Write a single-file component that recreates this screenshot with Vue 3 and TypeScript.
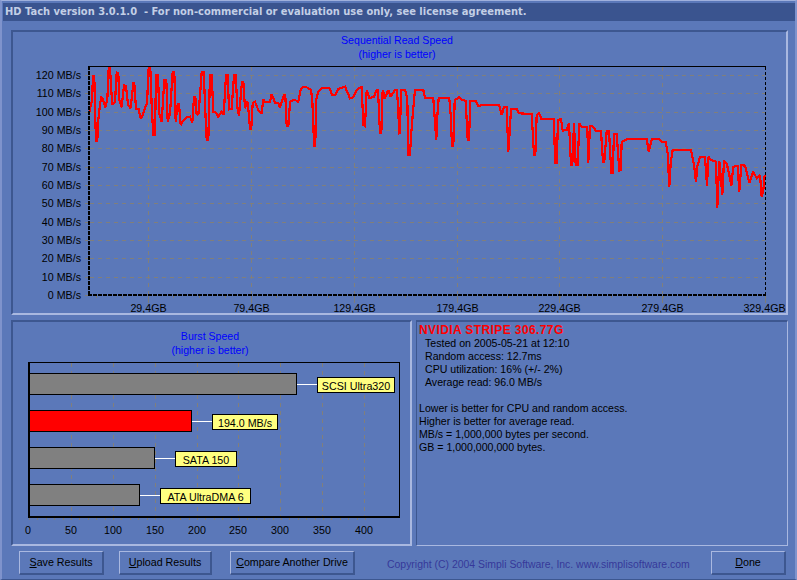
<script setup lang="ts">
const left =
  '267,340 272,318 276,300 279,228 283,228 285,330 288,422 292,422 295,360 298,335 300,310 304,293 308,296 316,322 322,300 326,205 330,205 334,270 337,315 345,305 350,218 355,220 358,300 365,322 372,255 378,258 384,315 392,325 400,250 403,250 408,328 416,328 422,356 428,345 436,320 441,310 446,203 451,203 455,320 460,405 465,405 468,225 474,225 478,340 485,365 493,240 499,240 503,365 510,340 518,215 523,215 527,365 533,312 537,312 542,375 550,362 560,352 570,350 577,368 582,290 586,290 590,345 596,340 605,215 611,215 617,360 620,420 625,420 630,225 635,225 640,335 648,338 655,350 665,335 671,345 678,225 683,225 687,328 695,326 702,225 707,225 712,320 717,348 726,245 730,245 735,325 742,305 747,345 750,388 754,385 758,310 765,305 775,330 785,340 790,298 795,306 810,305 815,282 825,308 835,310 840,322 852,285 856,285 860,378 865,378 870,310 872,303 885,300 895,305 902,270 910,260 920,262 933,270 937,300 940,380 943,438 946,438 948,300 955,275 965,265 988,263 996,285 1005,285 1015,267 1035,260 1050,295 1060,292 1070,270 1085,260 1090,375 1095,378 1100,270 1108,295 1122,290 1130,270 1134,270 1140,400 1144,400 1148,270 1155,295 1165,270 1172,290 1185,270 1190,270 1195,320 1197,400'
const right =
  '0,398 3,270 15,270 22,295 25,465 30,465 33,410 38,345 45,270 70,270 75,293 100,295 106,380 109,420 112,350 116,295 148,295 152,345 156,438 160,438 164,300 178,292 185,300 197,302 203,420 207,420 211,303 228,303 235,318 250,315 285,316 298,316 305,345 312,320 320,320 325,455 329,395 333,328 350,327 356,340 395,342 402,465 406,465 410,345 417,340 424,356 462,356 465,488 470,488 474,360 483,357 488,392 500,390 507,370 513,495 517,495 522,370 527,495 533,495 538,370 545,380 562,380 565,488 570,378 580,380 588,393 603,393 609,485 613,485 620,393 627,393 634,518 638,518 642,402 650,402 658,512 662,510 665,425 680,418 740,416 746,455 755,418 775,416 785,425 797,425 803,460 808,561 812,488 818,450 873,450 882,495 888,545 892,500 900,470 915,470 921,558 925,470 932,480 948,485 952,624 958,482 967,585 972,482 980,490 988,525 994,558 1000,500 1013,498 1018,575 1024,495 1035,497 1048,548 1060,515 1070,535 1080,525 1085,591 1090,570 1094,525'

const toPoints = (s: string, dx: number) =>
  s
    .split(' ')
    .map((p) => {
      const [x, y] = p.split(',').map(Number)
      return `${(dx + x / 3).toFixed(1)},${(y / 3).toFixed(1)}`
    })
    .join(' ')
const trace = toPoints(left, 0) + ' ' + toPoints(right, 400)

const yTicks = [120, 110, 100, 90, 80, 70, 60, 50, 40, 30, 20, 10, 0].map((v) => ({
  v,
  y: Math.round(295 - v * 1.834) + 0.5,
}))
const xTicks = [
  { x: 148.5, t: '29,4GB' },
  { x: 251.5, t: '79,4GB' },
  { x: 354.5, t: '129,4GB' },
  { x: 457.5, t: '179,4GB' },
  { x: 559.5, t: '229,4GB' },
  { x: 662.5, t: '279,4GB' },
  { x: 765.5, t: '329,4GB' },
]
const minor = Array.from({ length: 26 }, (_, i) => Math.round(96 + i * 25.75) + 0.5)

const burstGrid = [71, 113, 155, 197, 238, 280, 322, 364]
const burstAxis = [
  { x: 28, t: '0' },
  { x: 71, t: '50' },
  { x: 113, t: '100' },
  { x: 155, t: '150' },
  { x: 197, t: '200' },
  { x: 238, t: '250' },
  { x: 280, t: '300' },
  { x: 322, t: '350' },
  { x: 364, t: '400' },
]
const burstMinor = Array.from({ length: 41 }, (_, i) => Math.round(29 + i * 8.4) + 0.5)
const bars = [
  { y: 373.5, end: 296.5, lx: 317.5, lw: 77, ly: 377.5, label: 'SCSI Ultra320', fill: '#808080' },
  { y: 410.5, end: 191.5, lx: 212.5, lw: 65, ly: 414.5, label: '194.0 MB/s', fill: '#ff0000' },
  { y: 447.5, end: 154.5, lx: 175.5, lw: 61, ly: 451.5, label: 'SATA 150', fill: '#808080' },
  { y: 484.5, end: 139.5, lx: 160.5, lw: 90, ly: 488.5, label: 'ATA UltraDMA 6', fill: '#808080' },
]
const stats = [
  'Tested on 2005-05-21 at 12:10',
  'Random access: 12.7ms',
  'CPU utilization: 16% (+/- 2%)',
  'Average read: 96.0 MB/s',
]
const notes = [
  'Lower is better for CPU and random access.',
  'Higher is better for average read.',
  'MB/s = 1,000,000 bytes per second.',
  'GB = 1,000,000,000 bytes.',
]
</script>

<template>
  <div class="window">
    <header class="titlebar">HD Tach version 3.0.1.0&nbsp; - For non-commercial or evaluation use only, see license agreement.</header>

    <section class="panel top">
      <svg class="chart" width="773" height="281" viewBox="13 32 773 281">
        <text class="title" x="397" y="44">Sequential Read Speed</text>
        <text class="title" x="397" y="58">(higher is better)</text>
        <g class="grid">
          <line v-for="t in yTicks.slice(0, -1)" :key="t.v" x1="90" x2="765" :y1="t.y" :y2="t.y" />
          <line v-for="t in xTicks.slice(0, -1)" :key="t.x" :x1="t.x" :x2="t.x" y1="67" y2="294" />
        </g>
        <g class="tick">
          <line v-for="t in yTicks" :key="t.v" x1="85" x2="88" :y1="t.y" :y2="t.y" />
          <line v-for="m in minor" :key="m" :x1="m" :x2="m" y1="296" y2="298" />
          <line v-for="t in xTicks" :key="t.x" :x1="t.x" :x2="t.x" y1="296" y2="303" />
        </g>
        <polyline class="trace" :points="trace" />
        <line class="axis" x1="88" x2="766" y1="66.5" y2="66.5" />
        <line class="axis dashed" x1="765.5" x2="765.5" y1="67" y2="295" />
        <line class="axis thick dotted" x1="89" x2="89" y1="66" y2="296" />
        <line class="axis thick dotted" x1="88" x2="766" y1="295" y2="295" />
        <text v-for="t in yTicks" :key="t.v" class="label end" x="81" :y="t.y + 3.5">{{ t.v }} MB/s</text>
        <text v-for="t in xTicks" :key="t.x" class="label mid" :x="t.t === '329,4GB' ? 764.5 : t.x" y="312">{{ t.t }}</text>
      </svg>
    </section>

    <div class="lower">
      <section class="panel burst">
        <svg class="chart" width="396" height="221" viewBox="13 322 396 221">
          <text class="title" x="210" y="340">Burst Speed</text>
          <text class="title" x="210" y="354">(higher is better)</text>
          <g class="grid">
            <line v-for="g in burstGrid" :key="g" :x1="g + 0.5" :x2="g + 0.5" y1="363" y2="516" />
          </g>
          <g class="tick">
            <line v-for="m in burstMinor" :key="m" :x1="m" :x2="m" y1="518" y2="520" />
          </g>
          <g v-for="b in bars" :key="b.label">
            <line class="connector" :x1="b.end" :x2="b.lx" :y1="b.y + 11" :y2="b.y + 11" />
            <rect class="bar" x="29.5" :y="b.y" :width="b.end - 29.5" height="21" :fill="b.fill" />
            <rect class="tag" :x="b.lx" :y="b.ly" :width="b.lw" height="15" />
            <text class="label mid" :x="b.lx + b.lw / 2" :y="b.ly + 12">{{ b.label }}</text>
          </g>
          <line class="axis" x1="28" x2="400" y1="362.5" y2="362.5" />
          <line class="axis" x1="399.5" x2="399.5" y1="362" y2="518" />
          <line class="axis thick" x1="29" x2="29" y1="362" y2="518" />
          <line class="axis thick" x1="28" x2="400" y1="517" y2="517" />
          <text v-for="a in burstAxis" :key="a.t" class="label mid" :x="a.x" y="534">{{ a.t }}</text>
        </svg>
      </section>

      <section class="panel info">
        <h2 class="drive">NVIDIA STRIPE 306.77G</h2>
        <ul class="stats">
          <li v-for="s in stats" :key="s">{{ s }}</li>
        </ul>
        <ul class="notes">
          <li v-for="n in notes" :key="n">{{ n }}</li>
        </ul>
      </section>
    </div>

    <footer class="footer">
      <button class="btn save"><u>S</u>ave Results</button>
      <button class="btn upload"><u>U</u>pload Results</button>
      <button class="btn compare"><u>C</u>ompare Another Drive</button>
      <p class="copyright">Copyright (C) 2004 Simpli Software, Inc. www.simplisoftware.com</p>
      <button class="btn done"><u>D</u>one</button>
    </footer>
  </div>
</template>

<style>
html,
body {
  margin: 0;
  background: #5b78b9;
  overflow: hidden;
}
</style>

<style scoped>
.window {
  box-sizing: border-box;
  width: 797px;
  height: 580px;
  overflow: hidden;
  background: #5b78b9;
  border-top: 1px solid #9fb0dc;
  border-left: 2px solid #7f93cc;
  border-right: 2px solid #7f93cc;
  border-bottom: 1px solid #3d5790;
  padding-top: 2px;
  font: 10.6px "Liberation Sans", Arial, sans-serif;
  color: #000;
}
.titlebar {
  box-sizing: border-box;
  height: 18px;
  margin-left: 1px;
  padding-left: 2px;
  background: #3a548f;
  color: #c3cfe6;
  font: bold 9.92px/18px "DejaVu Sans", Verdana, sans-serif;
  white-space: pre;
}
.panel {
  box-sizing: border-box;
  border-style: solid;
  border-color: #3d5790 #a9b8e0 #a9b8e0 #3d5790;
  border-width: 2px;
}
.top {
  margin: 9px 7px 0 9px;
  height: 285px;
}
.chart {
  display: block;
}
.lower {
  display: flex;
  gap: 4px;
  margin: 5px 7px 0 9px;
  height: 226px;
}
.burst {
  width: 401px;
  flex: none;
}
.info {
  flex: 1;
  border-width: 2px 1px 1px 1px;
  padding: 1px 0 0 2px;
}
.drive {
  margin: 0;
  color: #ff0000;
  font: bold 12px/14px "Liberation Sans", Arial, sans-serif;
  letter-spacing: 0.4px;
}
.stats,
.notes {
  list-style: none;
  margin: 0;
  padding: 0;
  line-height: 13px;
}
.stats {
  padding-left: 6px;
}
.notes {
  margin-top: 13px;
}
.footer {
  display: flex;
  align-items: center;
  height: 24px;
  margin: 5px 0 0 17px;
}
.btn {
  box-sizing: border-box;
  height: 24px;
  padding: 0 0 1px;
  background: #5b78b9;
  color: #000;
  border-style: solid;
  border-width: 1px 2px 2px 1px;
  border-color: #a9b8e0 #3d5790 #3d5790 #a9b8e0;
  font: 10.7px "Liberation Sans", Arial, sans-serif;
  white-space: nowrap;
}
.save {
  width: 85px;
}
.upload {
  width: 93px;
  margin-left: 15px;
}
.compare {
  width: 125px;
  margin-left: 18px;
}
.copyright {
  margin: 2px 0 0 32px;
  width: 324px;
  color: #36389a;
  font-size: 10.45px;
  white-space: nowrap;
}
.done {
  width: 75px;
}
.title {
  fill: #0000ff;
  text-anchor: middle;
  font-size: 10.6px;
}
.label {
  fill: #000;
  font-size: 10.7px;
}
.end {
  text-anchor: end;
}
.mid {
  text-anchor: middle;
}
.grid line {
  stroke: #807f7c;
  stroke-width: 1;
  stroke-dasharray: 4 4;
  shape-rendering: crispEdges;
}
.tick line {
  stroke: #7d7d78;
  stroke-width: 1;
  shape-rendering: crispEdges;
}
.trace {
  fill: none;
  stroke: #ff0000;
  stroke-width: 2.2;
  stroke-linejoin: miter;
  stroke-miterlimit: 2;
  shape-rendering: crispEdges;
}
.axis {
  stroke: #000;
  stroke-width: 1;
  shape-rendering: crispEdges;
}
.thick {
  stroke-width: 2;
}
.dashed {
  stroke-dasharray: 3 2;
}
.dotted {
  stroke-dasharray: 4 1;
}
.bar {
  stroke: #000;
  stroke-width: 1;
  shape-rendering: crispEdges;
}
.tag {
  fill: #ffff80;
  stroke: #000;
  stroke-width: 1;
  shape-rendering: crispEdges;
}
.connector {
  stroke: #fff;
  stroke-width: 1;
  shape-rendering: crispEdges;
}
</style>
